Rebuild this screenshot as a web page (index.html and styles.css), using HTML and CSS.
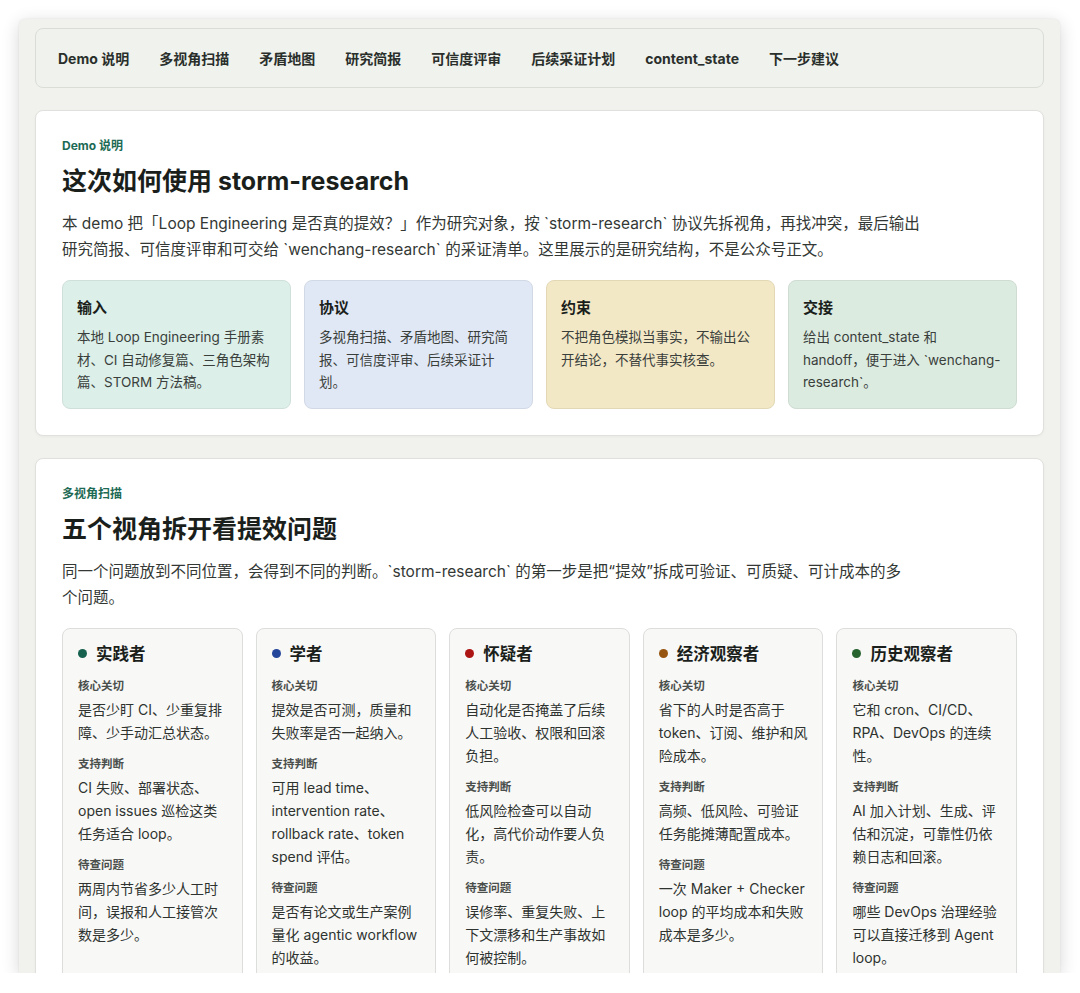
FILE: index.html
```html
<!DOCTYPE html>
<html lang="zh-CN">
<head>
<meta charset="utf-8">
<title>storm-research demo</title>
<link rel="stylesheet" href="styles.css">
</head>
<body>
<div class="window">
  <div class="page">
    <nav class="nav">
      <a>Demo 说明</a>
      <a>多视角扫描</a>
      <a>矛盾地图</a>
      <a>研究简报</a>
      <a>可信度评审</a>
      <a>后续采证计划</a>
      <a>content_state</a>
      <a>下一步建议</a>
    </nav>

    <section class="card">
      <div class="eyebrow">Demo 说明</div>
      <h2 class="title">这次如何使用 storm-research</h2>
      <p class="lead">本 demo 把「Loop Engineering 是否真的提效？」作为研究对象，按 `storm-research` 协议先拆视角，再找冲突，最后输出研究简报、可信度评审和可交给 `wenchang-research` 的采证清单。这里展示的是研究结构，不是公众号正文。</p>
      <div class="boxes">
        <div class="box mint"><h3>输入</h3><p>本地 Loop Engineering 手册素材、CI 自动修复篇、三角色架构篇、STORM 方法稿。</p></div>
        <div class="box blue"><h3>协议</h3><p>多视角扫描、矛盾地图、研究简报、可信度评审、后续采证计划。</p></div>
        <div class="box yellow"><h3>约束</h3><p>不把角色模拟当事实，不输出公开结论，不替代事实核查。</p></div>
        <div class="box green"><h3>交接</h3><p>给出 content_state 和 handoff，便于进入 `wenchang-research`。</p></div>
      </div>
    </section>

    <section class="card">
      <div class="eyebrow">多视角扫描</div>
      <h2 class="title">五个视角拆开看提效问题</h2>
      <p class="lead lead-narrow">同一个问题放到不同位置，会得到不同的判断。`storm-research` 的第一步是把“提效”拆成可验证、可质疑、可计成本的多个问题。</p>
      <div class="views">
        <div class="view">
          <h3><span class="dot d1"></span>实践者</h3>
          <h4>核心关切</h4><p>是否少盯 CI、少重复排障、少手动汇总状态。</p>
          <h4>支持判断</h4><p>CI 失败、部署状态、open issues 巡检这类任务适合 loop。</p>
          <h4>待查问题</h4><p>两周内节省多少人工时间，误报和人工接管次数是多少。</p>
        </div>
        <div class="view">
          <h3><span class="dot d2"></span>学者</h3>
          <h4>核心关切</h4><p>提效是否可测，质量和失败率是否一起纳入。</p>
          <h4>支持判断</h4><p>可用 lead time、intervention rate、rollback rate、token spend 评估。</p>
          <h4>待查问题</h4><p>是否有论文或生产案例量化 agentic workflow 的收益。</p>
        </div>
        <div class="view">
          <h3><span class="dot d3"></span>怀疑者</h3>
          <h4>核心关切</h4><p>自动化是否掩盖了后续人工验收、权限和回滚负担。</p>
          <h4>支持判断</h4><p>低风险检查可以自动化，高代价动作要人负责。</p>
          <h4>待查问题</h4><p>误修率、重复失败、上下文漂移和生产事故如何被控制。</p>
        </div>
        <div class="view">
          <h3><span class="dot d4"></span>经济观察者</h3>
          <h4>核心关切</h4><p>省下的人时是否高于 token、订阅、维护和风险成本。</p>
          <h4>支持判断</h4><p>高频、低风险、可验证任务能摊薄配置成本。</p>
          <h4>待查问题</h4><p>一次 Maker + Checker loop 的平均成本和失败成本是多少。</p>
        </div>
        <div class="view">
          <h3><span class="dot d5"></span>历史观察者</h3>
          <h4>核心关切</h4><p>它和 cron、CI/CD、RPA、DevOps 的连续性。</p>
          <h4>支持判断</h4><p>AI 加入计划、生成、评估和沉淀，可靠性仍依赖日志和回滚。</p>
          <h4>待查问题</h4><p>哪些 DevOps 治理经验可以直接迁移到 Agent loop。</p>
        </div>
      </div>
    </section>
  </div>
</div>
</body>
</html>
```

FILE: styles.css
```css
* { box-sizing: border-box; }
html, body { margin: 0; padding: 0; }
body {
  background: #ffffff;
  font-family: Inter, "Noto Sans CJK SC", "Noto Sans", sans-serif;
  color: #1e2320;
}
.window {
  margin: 19px 20px 0 19px;
  height: 954px;
  background: #f1f2ee;
  border-radius: 6px 6px 0 0;
  box-shadow: 0 4px 18px rgba(0, 0, 0, 0.16), 0 0 2px rgba(0, 0, 0, 0.08);
  overflow: hidden;
}
.page {
  padding: 9px 16px 0 16px;
  display: flex;
  flex-direction: column;
  gap: 22px;
}
.nav {
  display: flex;
  align-items: center;
  gap: 30px;
  height: 60px;
  padding: 0 22px;
  background: #eff2ed;
  border: 1px solid #d9ddd5;
  border-radius: 8px;
}
.nav a {
  font-size: 14px;
  font-weight: 700;
  color: #2a2f2c;
  text-decoration: none;
}
.card {
  background: #fff;
  border: 1px solid #dfe1dc;
  border-radius: 8px;
  padding: 27px 26px 26px 26px;
  box-shadow: 0 1px 3px rgba(0, 0, 0, 0.04);
}
.eyebrow {
  font-size: 12px;
  font-weight: 700;
  color: #1d6a55;
  line-height: 16px;
}
.title {
  margin: 10px 0 0 0;
  font-size: 25px;
  font-weight: 700;
  line-height: 34px;
  color: #1b1f1c;
}
.lead {
  margin: 13px 0 0 0;
  max-width: 866px;
  font-size: 15.5px;
  line-height: 26px;
  color: #333835;
}
.lead-narrow {
  max-width: 842px;
}
.boxes {
  margin-top: 17px;
  display: grid;
  grid-template-columns: repeat(4, 1fr);
  gap: 13px;
}
.box {
  border: 1px solid #d5dad4;
  border-radius: 8px;
  padding: 17px 14px 14px 14px;
  min-height: 128px;
}
.box h3 {
  margin: 0 0 8px 0;
  font-size: 15px;
  font-weight: 700;
  line-height: 20px;
  color: #1b1f1c;
}
.box p {
  margin: 0;
  font-size: 13.5px;
  line-height: 22.5px;
  color: #3a3f3c;
}
.mint { background: #dcefe9; border-color: #cfe0da; }
.blue { background: #e1e8f5; border-color: #d2d9e6; }
.yellow { background: #f3e8c6; border-color: #e3d8b6; }
.green { background: #dcebe0; border-color: #cedcd2; }
.views {
  margin-top: 17px;
  display: grid;
  grid-template-columns: repeat(5, 1fr);
  gap: 13px;
}
.view {
  background: #f8f8f6;
  border: 1px solid #dcdedb;
  border-radius: 8px;
  padding: 13px 11px 16px 15px;
}
.view h3 {
  margin: 0 0 2px 0;
  display: flex;
  align-items: center;
  gap: 9px;
  font-size: 16.5px;
  font-weight: 700;
  line-height: 24px;
  color: #1b1f1c;
}
.dot {
  width: 9px;
  height: 9px;
  border-radius: 50%;
  display: inline-block;
  flex: none;
}
.d1 { background: #17614f; }
.d2 { background: #24469a; }
.d3 { background: #ad1515; }
.d4 { background: #965510; }
.d5 { background: #27632f; }
.view h4 {
  margin: 12px 0 4px 0;
  font-size: 11.5px;
  font-weight: 600;
  line-height: 16px;
  color: #4a4f4c;
}
.view p {
  margin: 0;
  font-size: 14px;
  line-height: 23px;
  color: #2e3330;
}
```
